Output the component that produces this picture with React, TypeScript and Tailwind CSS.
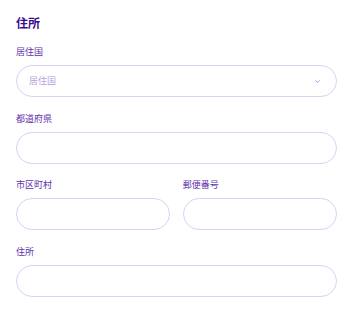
import { ChevronDown } from "lucide-react";

const font = { fontFamily: '"Noto Sans CJK JP", "Noto Sans", sans-serif' };

function Label({ children }: { children: React.ReactNode }) {
  return <label className="block text-[9px] leading-[12px] text-[#6234ad] mb-[7px]">{children}</label>;
}

function TextInput() {
  return (
    <input
      type="text"
      className="block w-full h-8 rounded-full border border-[#ddd0f3] bg-white px-3 text-[9px] text-[#3b0a78] outline-none"
    />
  );
}

export default function App() {
  return (
    <div className="w-[351px] h-[324px] bg-white" style={font}>
      <div className="flex flex-col gap-[15.5px] pl-4 pr-[14.5px] pt-[14.5px]">
        <h2 className="text-[12px] leading-[16px] font-bold text-[#3a0c8c]">住所</h2>

        <div>
          <Label>居住国</Label>
          <div className="flex items-center justify-between h-8 rounded-full border border-[#ddd0f3] bg-white pl-3 pr-[15px]">
            <span className="text-[9px] text-[#b8a2de]">居住国</span>
            <ChevronDown className="w-[7px] h-[7px] text-[#9d80d6]" strokeWidth={3} />
          </div>
        </div>

        <div>
          <Label>都道府県</Label>
          <TextInput />
        </div>

        <div className="grid grid-cols-2 gap-x-[13px]">
          <div>
            <Label>市区町村</Label>
            <TextInput />
          </div>
          <div>
            <Label>郵便番号</Label>
            <TextInput />
          </div>
        </div>

        <div>
          <Label>住所</Label>
          <TextInput />
        </div>
      </div>
    </div>
  );
}
